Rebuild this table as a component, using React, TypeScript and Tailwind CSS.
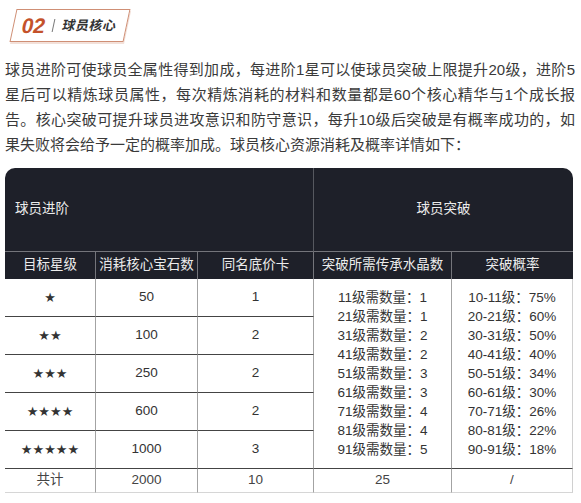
const lines = [
  "球员进阶可使球员全属性得到加成，每进阶1星可以使球员突破上限提升20级，进阶5",
  "星后可以精炼球员属性，每次精炼消耗的材料和数量都是60个核心精华与1个成长报",
  "告。核心突破可提升球员进攻意识和防守意识，每升10级后突破是有概率成功的，如",
];
const lastLine = "果失败将会给予一定的概率加成。球员核心资源消耗及概率详情如下：";

const advanceRows = [
  { stars: "★", gems: "50", cards: "1" },
  { stars: "★★", gems: "100", cards: "2" },
  { stars: "★★★", gems: "250", cards: "2" },
  { stars: "★★★★", gems: "600", cards: "2" },
  { stars: "★★★★★", gems: "1000", cards: "3" },
];

const crystalNeeds = [
  "11级需数量：1",
  "21级需数量：1",
  "31级需数量：2",
  "41级需数量：2",
  "51级需数量：3",
  "61级需数量：3",
  "71级需数量：4",
  "81级需数量：4",
  "91级需数量：5",
];

const rates = [
  "10-11级：75%",
  "20-21级：60%",
  "30-31级：50%",
  "40-41级：40%",
  "50-51级：34%",
  "60-61级：30%",
  "70-71级：26%",
  "80-81级：22%",
  "90-91级：18%",
];

const font = "font-['Liberation_Sans','Noto_Sans_CJK_SC',sans-serif]";

const HeadCell = ({ children, className = "" }: { children: React.ReactNode; className?: string }) => (
  <div
    className={`flex items-center justify-center bg-[#1e2029] text-[13.5px] text-[#ececec] ${className}`}
  >
    {children}
  </div>
);

const BodyCell = ({ children, className = "" }: { children: React.ReactNode; className?: string }) => (
  <div className={`flex items-center justify-center text-[13.5px] text-[#333] ${className}`}>
    {children}
  </div>
);

export default function App() {
  return (
    <div className={`min-h-[503px] w-[581px] bg-white px-[5px] pt-[9px] ${font}`}>
      {/* Section badge */}
      <div className="ml-[8px] flex h-[33px] w-[114px] -skew-x-12 items-center border border-[#cf8f75] pl-[8px] shadow-[1px_2px_0_#f3e1da]">
        <span className="font-['Liberation_Sans',sans-serif] text-[21px] font-bold leading-none text-[#c4522b]">
          02
        </span>
        <span className="ml-[8px] h-[13px] w-px bg-[#777]" />
        <span className="ml-[8px] text-[13px] font-bold tracking-[0.5px] text-[#333]">球员核心</span>
      </div>

      {/* Intro text */}
      <div className="mt-[15px] w-[570px] text-[15px] leading-[25px] text-[#3a3a3a]">
        {lines.map((l) => (
          <p key={l} className="text-justify [text-align-last:justify]">
            {l}
          </p>
        ))}
        <p>{lastLine}</p>
      </div>

      {/* Table */}
      <div className="mt-[11px] grid w-[568px] grid-cols-[91px_102px_116px_138px_121px] grid-rows-[84px_27px_38px_38px_38px_38px_38px_24px]">
        <HeadCell className="col-span-3 !justify-start rounded-tl-[10px] border-r border-b border-r-[#56585f] border-b-[#74757b] pl-[10px]">
          球员进阶
        </HeadCell>
        <HeadCell className="col-span-2 rounded-tr-[10px] border-b border-[#74757b]">球员突破</HeadCell>

        <HeadCell className="border-r border-[#74757b]">目标星级</HeadCell>
        <HeadCell className="border-r border-[#74757b]">消耗核心宝石数</HeadCell>
        <HeadCell className="border-r border-[#74757b]">同名底价卡</HeadCell>
        <HeadCell className="border-r border-[#74757b]">突破所需传承水晶数</HeadCell>
        <HeadCell>突破概率</HeadCell>

        {advanceRows.map((r, i) => (
          <div key={r.gems} className="contents">
            <BodyCell className="col-start-1 border-r border-b border-r-[#a3a3a3] border-b-[#444]" >
              <span className="font-['DejaVu_Sans',sans-serif] text-[13px]">{r.stars}</span>
            </BodyCell>
            <BodyCell className="border-r border-b border-r-[#a3a3a3] border-b-[#444]">{r.gems}</BodyCell>
            <BodyCell className="border-r border-b border-r-[#a3a3a3] border-b-[#444]">{r.cards}</BodyCell>
            {i === 0 && (
              <>
                <div className="col-start-4 row-span-5 row-start-3 flex flex-col items-center justify-center border-r border-b border-r-[#a3a3a3] border-b-[#444] text-[13.5px] leading-[19px] text-[#333]">
                  {crystalNeeds.map((t) => (
                    <span key={t}>{t}</span>
                  ))}
                </div>
                <div className="col-start-5 row-span-5 row-start-3 flex flex-col items-center justify-center border-r border-b border-r-[#d0d0d0] border-b-[#444] text-[13.5px] leading-[19px] text-[#333]">
                  {rates.map((t) => (
                    <span key={t}>{t}</span>
                  ))}
                </div>
              </>
            )}
          </div>
        ))}

        <BodyCell className="col-start-1 border-r border-b border-r-[#a3a3a3] border-b-[#d6d6d6] text-[#444]">共计</BodyCell>
        <BodyCell className="border-r border-b border-r-[#a3a3a3] border-b-[#d6d6d6] text-[#444]">2000</BodyCell>
        <BodyCell className="border-r border-b border-r-[#a3a3a3] border-b-[#d6d6d6] text-[#444]">10</BodyCell>
        <BodyCell className="border-r border-b border-r-[#a3a3a3] border-b-[#d6d6d6] text-[#444]">25</BodyCell>
        <BodyCell className="border-r border-b border-r-[#d0d0d0] border-b-[#d6d6d6] text-[#444]">/</BodyCell>
      </div>
    </div>
  );
}
